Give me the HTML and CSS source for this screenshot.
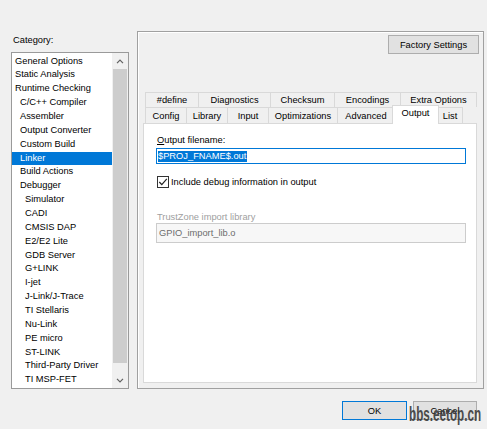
FILE: index.html
```html
<!DOCTYPE html>
<html>
<head>
<meta charset="utf-8">
<link rel="stylesheet" href="styles.css">
</head>
<body>
<div class="dialog">
  <div class="main">
    <div class="left">
      <div class="cat-label">Category:</div>
      <div class="listbox">
        <ul class="items">
          <li class="l0">General Options</li>
          <li class="l0">Static Analysis</li>
          <li class="l0">Runtime Checking</li>
          <li class="l1">C/C++ Compiler</li>
          <li class="l1">Assembler</li>
          <li class="l1">Output Converter</li>
          <li class="l1">Custom Build</li>
          <li class="l1 sel">Linker</li>
          <li class="l1">Build Actions</li>
          <li class="l1">Debugger</li>
          <li class="l2">Simulator</li>
          <li class="l2">CADI</li>
          <li class="l2">CMSIS DAP</li>
          <li class="l2">E2/E2 Lite</li>
          <li class="l2">GDB Server</li>
          <li class="l2">G+LINK</li>
          <li class="l2">I-jet</li>
          <li class="l2">J-Link/J-Trace</li>
          <li class="l2">TI Stellaris</li>
          <li class="l2">Nu-Link</li>
          <li class="l2">PE micro</li>
          <li class="l2">ST-LINK</li>
          <li class="l2">Third-Party Driver</li>
          <li class="l2">TI MSP-FET</li>
        </ul>
        <div class="scrollbar">
          <div class="arrow"><svg width="8" height="5" viewBox="0 0 8 5"><polyline points="1,4.2 4,1.2 7,4.2" fill="none" stroke="#606060" stroke-width="1.2"/></svg></div>
          <div class="thumb"></div>
          <div class="track"></div>
          <div class="arrow"><svg width="8" height="5" viewBox="0 0 8 5"><polyline points="1,0.8 4,3.8 7,0.8" fill="none" stroke="#606060" stroke-width="1.2"/></svg></div>
        </div>
      </div>
    </div>
    <div class="panel">
      <div class="panel-top"><button class="btn btn-factory">Factory Settings</button></div>
      <div class="tabs">
        <div class="tabrow row1">
          <div class="tab w53">#define</div>
          <div class="tab w72">Diagnostics</div>
          <div class="tab w64">Checksum</div>
          <div class="tab w66">Encodings</div>
          <div class="tab w77">Extra Options</div>
        </div>
        <div class="tabrow row2">
          <div class="tab w41">Config</div>
          <div class="tab w41">Library</div>
          <div class="tab w41">Input</div>
          <div class="tab w69">Optimizations</div>
          <div class="tab w57">Advanced</div>
          <div class="tab active">Output</div>
          <div class="tab w26">List</div>
        </div>
      </div>
      <div class="page">
        <div class="field-label"><u>O</u>utput filename:</div>
        <div class="input-active"><span class="selected">$PROJ_FNAME$.out</span></div>
        <div class="check-row">
          <span class="checkbox"><svg width="10" height="10" viewBox="0 0 10 10"><polyline points="1.3,5 3.8,7.6 8.8,1.8" fill="none" stroke="#222" stroke-width="1.2"/></svg></span>
          <span class="check-text">Include debug information in output</span>
        </div>
        <div class="field-label disabled">TrustZone import library</div>
        <div class="input-disabled">GPIO_import_lib.o</div>
      </div>
    </div>
  </div>
  <div class="footer">
    <button class="btn btn-ok">OK</button>
    <button class="btn btn-cancel">Cancel</button>
  </div>
  <div class="watermark">bbs.eetop.cn</div>
</div>
</body>
</html>
```
FILE: styles.css
```css
body {
  margin: 0;
  background: #f0f0f0;
  font-family: "Liberation Sans", Arial, sans-serif;
  font-size: 9.3px;
  color: #000;
}
.dialog {
  position: relative;
  width: 487px;
  height: 429px;
  overflow: hidden;
}
.main {
  display: flex;
  align-items: flex-start;
  padding: 31px 0 0 11px;
}
.left {
  width: 118px;
  margin-right: 8px;
  padding-top: 3px;
  display: flex;
  flex-direction: column;
  gap: 6px;
}
.cat-label {
  height: 12px;
  line-height: 12px;
  padding-left: 2px;
}
.listbox {
  height: 337px;
  box-sizing: border-box;
  border: 1px solid #9a9a9a;
  background: #fff;
  display: flex;
}
.items {
  list-style: none;
  margin: 0;
  padding: 1.5px 0 0 0;
  width: 100px;
}
.items li {
  height: 13.87px;
  line-height: 13.87px;
  white-space: nowrap;
}
.l0 { padding-left: 3px; }
.l1 { padding-left: 8px; }
.l2 { padding-left: 13px; }
.items li.sel {
  background: #0078d7;
  color: #fff;
}
.scrollbar {
  width: 16px;
  background: #f0f0f0;
  display: flex;
  flex-direction: column;
}
.arrow {
  height: 16px;
  display: flex;
  align-items: center;
  justify-content: center;
}
.thumb {
  height: 294px;
  margin: 0 1px;
  background: #cdcdcd;
}
.track { flex: 1; }
.panel {
  width: 347px;
  height: 358px;
  box-sizing: border-box;
  border: 1px solid #a0a0a0;
  box-shadow: inset 1px 1px 0 #fff;
  display: flex;
  flex-direction: column;
}
.panel-top {
  display: flex;
  justify-content: flex-end;
  padding: 3px 4px 0 0;
}
.btn {
  font-family: "Liberation Sans", Arial, sans-serif;
  font-size: 9.3px;
  color: #000;
  background: #e1e1e1;
  border: 1px solid #adadad;
  box-sizing: border-box;
  padding: 0;
  margin: 0;
}
.btn-factory {
  width: 91px;
  height: 19px;
}
.tabs {
  margin: 38px 0 0 7px;
  width: 332px;
}
.tabrow {
  display: flex;
  align-items: flex-end;
}
.row1 { height: 15px; }
.row2 { height: 16px; }
.tab {
  box-sizing: border-box;
  height: 100%;
  border-top: 1px solid #d9d9d9;
  border-left: 1px solid #d9d9d9;
  text-align: center;
  white-space: nowrap;
  background: #f0f0f0;
}
.row1 .tab { line-height: 14px; }
.row2 .tab { line-height: 15px; padding-top: 1px; }
.tab:last-child { border-right: 1px solid #d9d9d9; }
.w26 { width: 26px; }
.w41 { width: 41px; }
.w53 { width: 53px; }
.w57 { width: 57px; }
.w64 { width: 64px; }
.w66 { width: 66px; }
.w69 { width: 69px; }
.w72 { width: 72px; }
.w77 { width: 77px; }
.row2 .tab.active {
  width: 47px;
  height: 19px;
  margin: 0 -2px -1px -2px;
  padding-top: 0;
  line-height: 14px;
  background: #fff;
  border-right: 1px solid #d9d9d9;
  position: relative;
  z-index: 1;
}
.page {
  margin-left: 5px;
  width: 334px;
  height: 260px;
  box-sizing: border-box;
  border: 1px solid #d9d9d9;
  background: #fff;
  padding: 10px 10px 0 12px;
}
.field-label {
  height: 12px;
  line-height: 12px;
  padding-left: 1px;
}
.field-label.disabled {
  margin-top: 23px;
  color: #a0a0a0;
}
.input-active {
  margin-top: 2px;
  height: 16px;
  box-sizing: border-box;
  border: 1px solid #0078d7;
  padding-left: 1px;
  display: flex;
  align-items: center;
}
.selected {
  background: #0078d7;
  color: #fff;
  line-height: 11px;
  padding: 0 1px 0 0;
}
.check-row {
  margin-top: 12px;
  height: 12px;
  display: flex;
  align-items: center;
  padding-left: 1px;
}
.checkbox {
  width: 12px;
  height: 12px;
  box-sizing: border-box;
  border: 1px solid #333;
  background: #fff;
  display: flex;
  align-items: center;
  justify-content: center;
}
.check-text {
  margin-left: 2px;
  line-height: 12px;
}
.input-disabled {
  height: 20px;
  box-sizing: border-box;
  border: 1px solid #cccccc;
  background: #f7f7f7;
  color: #6d6d6d;
  padding-left: 2px;
  display: flex;
  align-items: center;
}
.footer {
  display: flex;
  justify-content: flex-end;
  gap: 6px;
  padding: 12px 10px 0 0;
}
.btn-ok {
  width: 65px;
  height: 19px;
  border-color: #0078d7;
}
.btn-cancel {
  width: 64px;
  height: 19px;
}
.watermark {
  position: absolute;
  left: 409px;
  top: 404px;
  font-family: "Liberation Sans", Arial, sans-serif;
  font-weight: bold;
  font-size: 20px;
  line-height: 20px;
  color: #3a3a3a;
  opacity: 0.9;
  white-space: nowrap;
  transform: scaleX(0.585);
  transform-origin: left top;
}
```
